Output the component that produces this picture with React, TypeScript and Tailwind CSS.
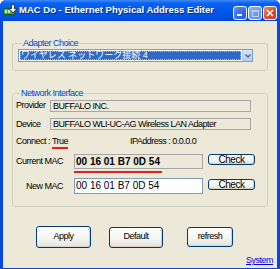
import React from "react";

const ui = "font-['Liberation_Sans','Noto_Sans_CJK_JP',sans-serif] text-[9px] tracking-[-0.5px] text-black";

function TitleIcon() {
    return (
        <svg width="15" height="13" viewBox="0 0 15 13" className="shrink-0">
            <rect x="0.5" y="4.5" width="11" height="6" fill="#3fae3f" stroke="#1d5e1d" />
            <rect x="2" y="6" width="2" height="3" fill="#bfe8bf" />
            <rect x="5" y="6" width="2" height="3" fill="#bfe8bf" />
            <path d="M8.5 0.5 h3 v4 h2.5 l-4 4.5 l-4 -4.5 h2.5 z" fill="#ffffff" stroke="#1d3b5e" strokeWidth="1" />
        </svg>
    );
}

function CapButton({ kind }: { kind: "min" | "max" | "close" }) {
    const base = "w-[14px] h-[14px] rounded-[3px] border border-white flex items-center justify-center";
    if (kind === "close") {
        return (
            <div className={`${base} bg-[linear-gradient(135deg,#f08a6a_0%,#e0502c_50%,#c8381a_100%)]`}>
                <svg width="8" height="8" viewBox="0 0 8 8">
                    <path d="M1 1 L7 7 M7 1 L1 7" stroke="#ffffff" strokeWidth="1.6" />
                </svg>
            </div>
        );
    }
    if (kind === "max") {
        return (
            <div className={`${base} border-[#c8d8fa] bg-[linear-gradient(135deg,#8fb4f8_0%,#6d98f0_60%,#5a86e8_100%)]`}>
                <div className="w-[7px] h-[7px] border border-[#b8cdf8] border-t-2" />
            </div>
        );
    }
    return (
        <div className={`${base} items-end pb-[3px] justify-start pl-[3px] bg-[linear-gradient(135deg,#5e95fa_0%,#2f68ea_60%,#2258e0_100%)]`}>
            <div className="w-[5px] h-[2px] bg-white" />
        </div>
    );
}

function XpButton({ label, className }: { label: string; className: string }) {
    return (
        <button className={`${className} border border-[#003c74] rounded-[3px] bg-[linear-gradient(to_bottom,#ffffff_0%,#f4f4f0_60%,#e3e2da_100%)] flex items-center justify-center shadow-[inset_-1px_-1px_0_#d6d0c5]`}>
            {label}
        </button>
    );
}

export default function App() {
    return (
        <div className={`${ui} w-[280px] h-[269px] flex flex-col bg-[#0a47dc] rounded-t-[6px] overflow-hidden`}>
            <div className="h-[21px] shrink-0 flex items-center pl-[3px] pr-[3px] bg-[linear-gradient(to_bottom,#3d8cf8_0%,#0b62f2_15%,#0057e8_50%,#0052e2_85%,#0044d4_100%)]">
                <TitleIcon />
                <span className="ml-[1px] font-bold text-[9.5px] tracking-[0px] text-white [text-shadow:1px_1px_0_#0a2a80] whitespace-nowrap">
                    MAC Do - Ethernet Physical Address Editer
                </span>
                <div className="ml-auto flex gap-[1px] mt-[5px]">
                    <CapButton kind="min" />
                    <CapButton kind="max" />
                    <CapButton kind="close" />
                </div>
            </div>

            <div className="flex-1 mx-[3px] mb-[5px] bg-[#ece9d8] flex flex-col">
                <fieldset className="mt-[16px] mx-[9px] border border-[#d0d0bf] rounded-[3px] pl-[5px] pb-[8px]">
                    <legend className="ml-[4px] px-[1px] leading-[12px] text-[#0046d5]">Adapter Choice</legend>
                    <div className="w-[235px] h-[13px] border border-[#7f9db9] bg-white flex">
                        <div className="flex-1 m-[1px] bg-[#316ac5] outline outline-1 outline-dotted outline-[#a0b8e8] -outline-offset-1 text-white tracking-[0px] leading-[9px] pl-[1px] whitespace-nowrap">
                            ワイヤレス ネットワーク接続 4
                        </div>
                        <div className="w-[10px] bg-[linear-gradient(to_bottom,#d8e4fc,#b4c8f4)] border-l border-[#b9c9ef] flex items-center justify-center">
                            <svg width="6" height="4" viewBox="0 0 6 4">
                                <path d="M0.5 0.5 L3 3 L5.5 0.5" stroke="#4d6185" strokeWidth="1.3" fill="none" />
                            </svg>
                        </div>
                    </div>
                </fieldset>

                <fieldset className="mt-[16px] mx-[9px] border border-[#d0d0bf] rounded-[3px] pl-[3px] pb-[12px]">
                    <legend className="ml-[4px] px-[1px] leading-[12px] text-[#0046d5]">Network Interface</legend>

                    <div className="flex items-center">
                        <span className="w-[34px]">Provider</span>
                        <div className="w-[201px] h-[12px] border border-[#a7a6aa] bg-[#ece9d8] leading-[10px] pl-[2px]">BUFFALO INC.</div>
                    </div>
                    <div className="flex items-center mt-[5px]">
                        <span className="w-[34px]">Device</span>
                        <div className="w-[201px] h-[12px] border border-[#a7a6aa] bg-[#ece9d8] leading-[10px] pl-[2px] whitespace-nowrap">BUFFALO WLI-UC-AG Wireless LAN Adapter</div>
                    </div>
                    <div className="flex items-center mt-[5px] h-[12px]">
                        <span className="w-[114px]">
                            Connect : <span className="border-b-2 border-[#e02020] pb-[1px]">True</span>
                        </span>
                        <span>IPAddress : 0.0.0.0</span>
                    </div>

                    <div className="flex items-start mt-[6px]">
                        <span className="w-[47px] text-right leading-[14px]">Current MAC</span>
                        <div className="ml-[11px] w-[129px] h-[15px] border border-[#a7a6aa] bg-[#ece9d8] font-bold text-[10px] tracking-[0px] leading-[13px] pl-[1px]">00 16 01 B7 0D 54</div>
                        <XpButton label="Check" className="ml-[5px] w-[47px] h-[11px] leading-[9px] text-[10px]" />
                    </div>
                    <div className="ml-[58px] mt-[2px] w-[88px] h-[2px] bg-[#e02020]" />

                    <div className="flex items-start mt-[5px]">
                        <span className="w-[47px] text-right leading-[16px]">New MAC</span>
                        <div className="ml-[11px] w-[129px] h-[16px] border border-[#7f9db9] bg-white text-[10px] tracking-[0px] leading-[14px] pl-[1px]">00 16 01 B7 0D 54</div>
                        <XpButton label="Check" className="ml-[5px] mt-[1px] w-[47px] h-[11px] leading-[9px] text-[10px]" />
                    </div>
                </fieldset>

                <div className="flex items-center mt-[19px] pl-[33px]">
                    <XpButton label="Apply" className="w-[55px] h-[22px]" />
                    <XpButton label="Default" className="ml-[18px] w-[54px] h-[21px]" />
                    <XpButton label="refresh" className="ml-[24px] w-[46px] h-[20px]" />
                </div>

                <div className="flex justify-end pr-[4px] mt-[6px]">
                    <span className="text-[#0000ee] underline">System</span>
                </div>
            </div>
        </div>
    );
}
